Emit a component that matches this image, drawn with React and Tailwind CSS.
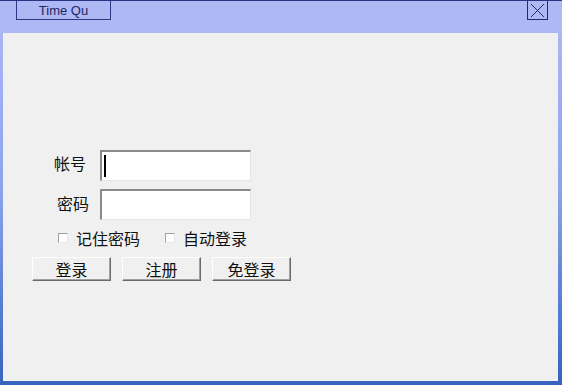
export default function App() {
    const cjk = { fontFamily: '"Noto Sans CJK SC", "Noto Sans", sans-serif' };

    return (
        <div className="w-[562px] h-[385px] flex flex-col bg-gradient-to-b from-[#b0b9f6] via-[#8aa3ec] to-[#3563bd] overflow-hidden">
            {/* title bar */}
            <div className="h-[33px] shrink-0 flex items-start justify-between bg-[#aeb8f4] border-t border-[#27347f]">
                <div className="ml-[16px] w-[95px] h-[19px] border border-t-0 border-[#2a3982] flex items-center justify-center text-[13px] text-[#1b2660] leading-none" style={{ fontFamily: '"Liberation Sans", Arial, sans-serif' }}>
                    Time Qu
                </div>
                <div className="mr-[14px] w-[21px] h-[19px] border border-t-0 border-[#1f2c6e] flex items-center justify-center">
                    <svg width="15" height="15" viewBox="0 0 15 15">
                        <path d="M1 1L14 14M14 1L1 14" stroke="#1f2c6e" strokeWidth="1" />
                    </svg>
                </div>
            </div>

            {/* client area */}
            <div className="flex-1 mx-[3px] mb-[4px] mr-[4px] bg-[#f0f0f0] flex flex-col pt-[117px]" style={cjk}>
                <div className="flex items-center h-[30px] pl-[51px]">
                    <span className="text-[16px] text-[#111] w-[32px] leading-none -mt-[4px]">帐号</span>
                    <div className="ml-[14px] w-[151px] h-[31px] bg-white border-t-2 border-l-2 border-[#8a8a8a] border-b border-r border-b-[#e4e4e4] border-r-[#e4e4e4] flex items-center pl-[2px]">
                        <div className="w-[2px] h-[22px] bg-black" />
                    </div>
                </div>
                <div className="flex items-center h-[30px] pl-[54px] mt-[9px]">
                    <span className="text-[16px] text-[#111] w-[32px] leading-none -mt-[2px]">密码</span>
                    <div className="ml-[11px] w-[151px] h-[31px] bg-white border-t-2 border-l-2 border-[#8a8a8a] border-b border-r border-b-[#e4e4e4] border-r-[#e4e4e4]" />
                </div>
                <div className="flex items-center h-[20px] mt-[9px] pl-[55px] text-[16px] text-[#111]">
                    <div className="w-[10px] h-[10px] border border-[#a0a0a0] border-b-[#e8e8e8] border-r-[#e8e8e8] bg-white" />
                    <span className="ml-[8px]">记住密码</span>
                    <div className="ml-[25px] w-[10px] h-[10px] border border-[#a0a0a0] border-b-[#e8e8e8] border-r-[#e8e8e8] bg-white" />
                    <span className="ml-[8px]">自动登录</span>
                </div>
                <div className="flex items-center gap-[11px] mt-[9px] pl-[29px]">
                    {['登录', '注册', '免登录'].map((t) => (
                        <button key={t} className="w-[79px] h-[24px] bg-[#f0f0f0] text-[16px] text-[#111] leading-none border border-t-white border-l-white border-b-[#6b6b6b] border-r-[#6b6b6b] shadow-[inset_-1px_-1px_0_#a0a0a0]">
                            {t}
                        </button>
                    ))}
                </div>
            </div>
        </div>
    );
}
